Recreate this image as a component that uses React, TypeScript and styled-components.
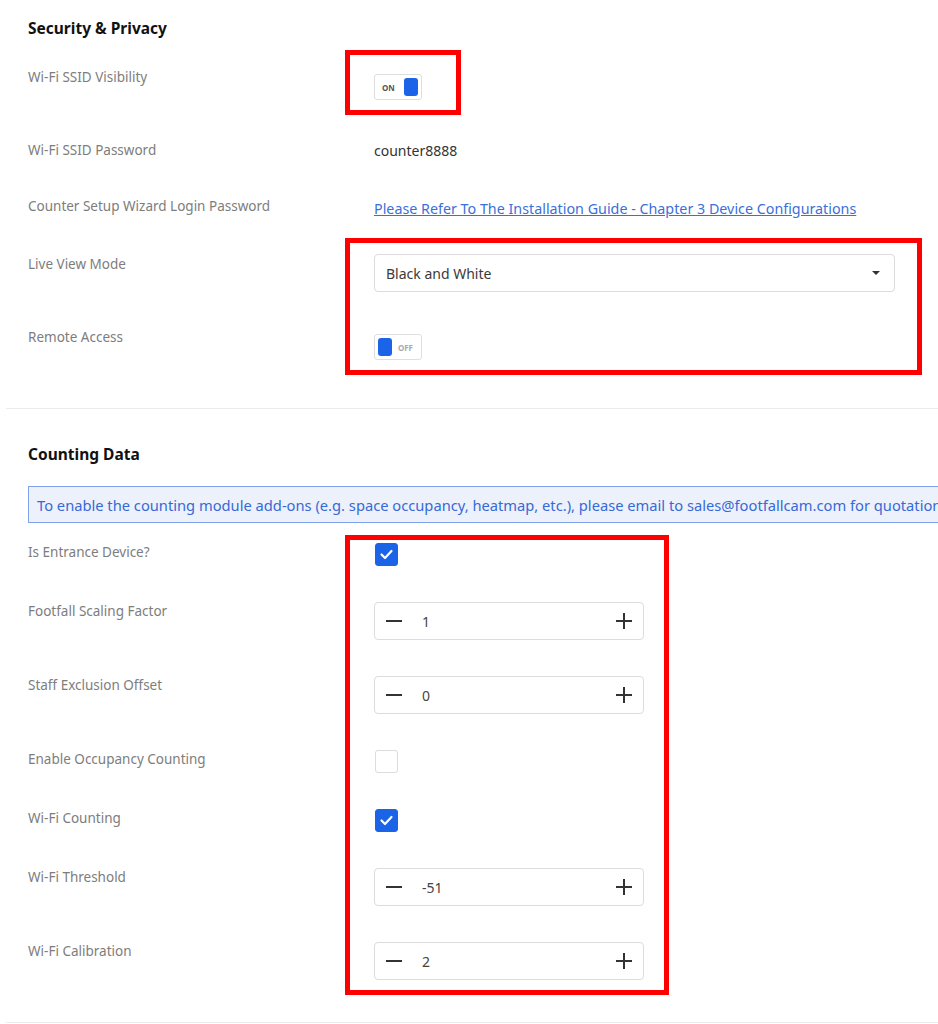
import { FC } from "react";
import styled, { createGlobalStyle } from "styled-components";

const GlobalStyle = createGlobalStyle`
  html, body {
    margin: 0;
    padding: 0;
    background: #ffffff;
    overflow: hidden;
  }
  body {
    font-family: "Noto Sans", "Open Sans", sans-serif;
    color: #333;
  }
`;

const Page = styled.div`
  position: relative;
  width: 938px;
  min-height: 1024px;
`;

const Section = styled.section<{ $top: number; $bottom: number }>`
  padding: ${(p) => p.$top}px 0 ${(p) => p.$bottom}px 28px;
`;

const SectionTitle = styled.h3`
  margin: 0;
  font-size: 15.5px;
  line-height: 20px;
  font-weight: 700;
  color: #111;
`;

const Rows = styled.div<{ $top: number }>`
  display: flex;
  flex-direction: column;
  gap: 36px;
  margin-top: ${(p) => p.$top}px;
`;

const Row = styled.div`
  display: grid;
  grid-template-columns: 346px 1fr;
  align-items: start;
`;

const Label = styled.div`
  font-size: 13.5px;
  line-height: 20px;
  color: #7d7d7d;
  margin-top: -1px;
`;

const ValueText = styled.div`
  font-size: 14px;
  line-height: 20px;
  color: #333;
`;

const GuideLink = styled.a`
  font-size: 14.3px;
  line-height: 20px;
  color: #3b6fd9;
  text-decoration: underline;
`;

const Divider = styled.hr`
  margin: 0 0 0 6px;
  border: none;
  border-top: 1px solid #ececec;
`;

const ToggleBox = styled.div<{ $on: boolean }>`
  box-sizing: border-box;
  margin: 6px 0 5px;
  width: 48px;
  height: 26px;
  border: 1px solid #dedede;
  border-radius: 3px;
  display: flex;
  flex-direction: ${(p) => (p.$on ? "row" : "row-reverse")};
  align-items: center;
  justify-content: space-between;
  padding: 0 3px 0 ${(p) => (p.$on ? 7 : 3)}px;
`;

const ToggleText = styled.span<{ $on: boolean }>`
  font-size: 8px;
  font-weight: 700;
  color: ${(p) => (p.$on ? "#555" : "#aaa")};
  margin-right: ${(p) => (p.$on ? 0 : 5)}px;
`;

const ToggleKnob = styled.span`
  width: 14px;
  height: 18px;
  border-radius: 3px;
  background: #1b64e8;
`;

const Toggle: FC<{ on: boolean }> = ({ on }) => (
  <ToggleBox $on={on}>
    <ToggleText $on={on}>{on ? "ON" : "OFF"}</ToggleText>
    <ToggleKnob />
  </ToggleBox>
);

const SelectBox = styled.div`
  box-sizing: border-box;
  width: 521px;
  height: 38px;
  margin-top: -1px;
  border: 1px solid #dcdcdc;
  border-radius: 4px;
  display: flex;
  align-items: center;
  justify-content: space-between;
  padding: 0 14px 0 11px;
  font-size: 14px;
  color: #3a3a3a;
`;

const Caret = styled.span`
  width: 0;
  height: 0;
  border-left: 4px solid transparent;
  border-right: 4px solid transparent;
  border-top: 4px solid #333;
`;

const StepperBox = styled.div`
  box-sizing: border-box;
  width: 270px;
  height: 38px;
  border: 1px solid #dcdcdc;
  border-radius: 4px;
  display: flex;
  align-items: center;
  padding: 0 11px 0 11px;
`;

const StepperValue = styled.span`
  flex: 1;
  margin-left: 20px;
  font-size: 14px;
  color: #444;
`;

const StepIcon = styled.svg`
  width: 16px;
  height: 16px;
  stroke: #333;
  stroke-width: 2;
`;

const Stepper: FC<{ value: number }> = ({ value }) => (
  <StepperBox>
    <StepIcon viewBox="0 0 16 16">
      <line x1="0" y1="8" x2="16" y2="8" />
    </StepIcon>
    <StepperValue>{value}</StepperValue>
    <StepIcon viewBox="0 0 16 16">
      <line x1="0" y1="8" x2="16" y2="8" />
      <line x1="8" y1="0" x2="8" y2="16" />
    </StepIcon>
  </StepperBox>
);

const CheckBox = styled.div<{ $checked: boolean }>`
  box-sizing: border-box;
  width: 23px;
  height: 23px;
  margin-left: 1px;
  border-radius: 3px;
  border: 1px solid ${(p) => (p.$checked ? "#1b64e8" : "#dcdcdc")};
  background: ${(p) => (p.$checked ? "#1b64e8" : "#fff")};
  display: flex;
  align-items: center;
  justify-content: center;
`;

const Check: FC<{ checked: boolean }> = ({ checked }) => (
  <CheckBox $checked={checked}>
    {checked && (
      <svg width="15" height="15" viewBox="0 0 15 15">
        <polyline
          points="2.5,7.5 6,11 12.5,4"
          fill="none"
          stroke="#fff"
          strokeWidth="2.2"
          strokeLinecap="round"
          strokeLinejoin="round"
        />
      </svg>
    )}
  </CheckBox>
);

const InfoBanner = styled.div`
  margin-top: 22px;
  box-sizing: border-box;
  width: max-content;
  height: 37px;
  display: flex;
  align-items: center;
  padding: 0 12px 0 8px;
  border: 1px solid #7ea3ec;
  background: #edf1fb;
  color: #3769d6;
  font-size: 14.7px;
  white-space: nowrap;
`;

const Annotation = styled.div`
  position: absolute;
  box-sizing: border-box;
  border: 5px solid #ff0000;
  pointer-events: none;
`;

export default function App() {
  return (
    <Page>
      <GlobalStyle />
      <Section $top={18} $bottom={43}>
        <SectionTitle>Security &amp; Privacy</SectionTitle>
        <Rows $top={30}>
          <Row>
            <Label>Wi-Fi SSID Visibility</Label>
            <Toggle on />
          </Row>
          <Row>
            <Label>Wi-Fi SSID Password</Label>
            <ValueText>counter8888</ValueText>
          </Row>
          <Row>
            <Label>Counter Setup Wizard Login Password</Label>
            <div>
              <GuideLink href="#">
                Please Refer To The Installation Guide - Chapter 3 Device
                Configurations
              </GuideLink>
            </div>
          </Row>
          <Row>
            <Label>Live View Mode</Label>
            <SelectBox>
              <span>Black and White</span>
              <Caret />
            </SelectBox>
          </Row>
          <Row>
            <Label>Remote Access</Label>
            <Toggle on={false} />
          </Row>
        </Rows>
      </Section>
      <Divider />
      <Section $top={35} $bottom={42}>
        <SectionTitle>Counting Data</SectionTitle>
        <InfoBanner>
          To enable the counting module add-ons (e.g. space occupancy,
          heatmap, etc.), please email to sales@footfallcam.com for quotation.
        </InfoBanner>
        <Rows $top={20}>
          <Row>
            <Label>Is Entrance Device?</Label>
            <Check checked />
          </Row>
          <Row>
            <Label>Footfall Scaling Factor</Label>
            <Stepper value={1} />
          </Row>
          <Row>
            <Label>Staff Exclusion Offset</Label>
            <Stepper value={0} />
          </Row>
          <Row>
            <Label>Enable Occupancy Counting</Label>
            <Check checked={false} />
          </Row>
          <Row>
            <Label>Wi-Fi Counting</Label>
            <Check checked />
          </Row>
          <Row>
            <Label>Wi-Fi Threshold</Label>
            <Stepper value={-51} />
          </Row>
          <Row>
            <Label>Wi-Fi Calibration</Label>
            <Stepper value={2} />
          </Row>
        </Rows>
      </Section>
      <Divider />
      <Annotation style={{ left: 345, top: 50, width: 116, height: 65 }} />
      <Annotation style={{ left: 345, top: 238, width: 577, height: 137 }} />
      <Annotation style={{ left: 345, top: 535, width: 324, height: 460 }} />
    </Page>
  );
}
